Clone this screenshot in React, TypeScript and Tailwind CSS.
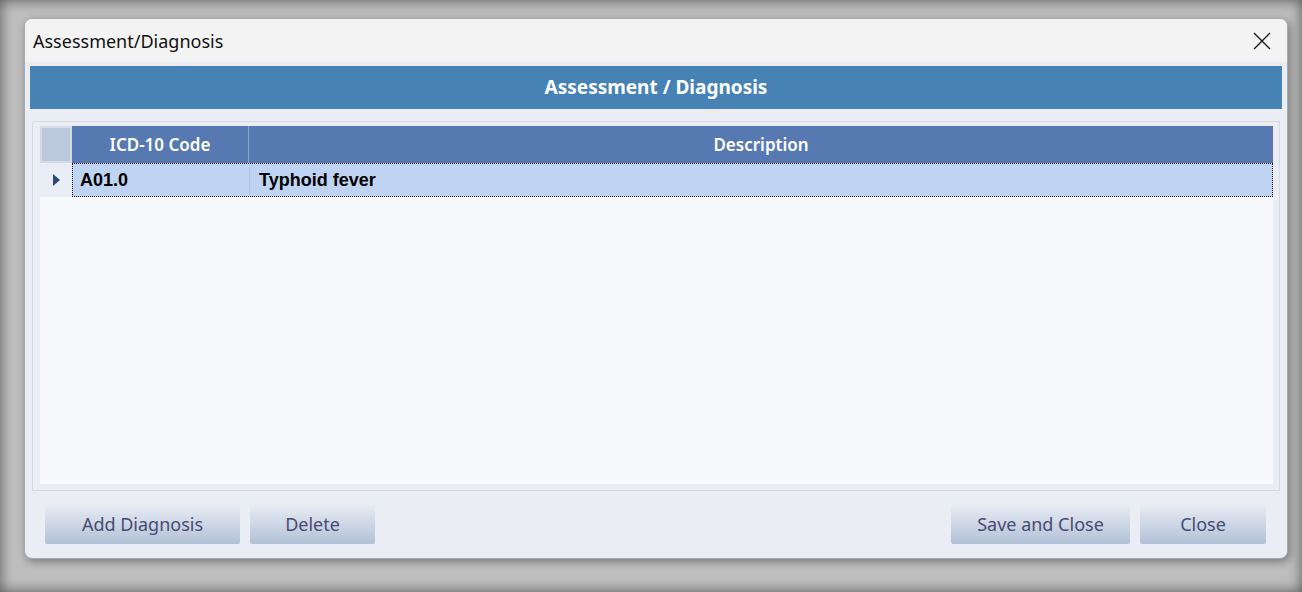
const font = { fontFamily: '"Noto Sans", "Open Sans", sans-serif' };

function DialogButton({ label, width }: { label: string; width: string }) {
  return (
    <button
      className={`${width} h-[40px] rounded-[2px] bg-gradient-to-b from-[#e9edf4] to-[#b2c1d7] text-[18px] text-[#4a4b72]`}
      type="button"
    >
      {label}
    </button>
  );
}

export default function App() {
  return (
    <div
      className="h-[592px] w-[1302px] bg-[#bebebe] pt-[18px] pl-[24px] shadow-[inset_0_0_14px_rgba(0,0,0,0.55)]"
      style={font}
    >
      <div className="flex h-[541px] w-[1264px] flex-col overflow-hidden rounded-[8px] border border-[#a9a9a9] bg-[#eaedf4] shadow-[2px_3px_8px_rgba(0,0,0,0.35)]">
        {/* title bar */}
        <div className="flex h-[43px] shrink-0 items-center justify-between bg-[#f3f3f3] pl-[8px] pr-[16px]">
          <span className="pt-[1px] text-[18px] text-[#111]">Assessment/Diagnosis</span>
          <svg width="18" height="18" viewBox="0 0 18 18">
            <path d="M1 1 L17 17 M17 1 L1 17" stroke="#1a1a1a" strokeWidth="1.4" />
          </svg>
        </div>

        <div className="flex flex-1 flex-col px-[5px] pt-[4px]">
          <div className="flex h-[43px] items-center justify-center bg-[#4682b4] text-[19px] font-bold text-white">
            Assessment / Diagnosis
          </div>

          {/* grid panel */}
          <div className="mt-[12px] ml-[2px] mr-[2px] flex h-[370px] flex-col rounded-tl-[3px] border border-[#d2d9e4] pt-[4px] pr-[6px] pb-[6px] pl-[7px]">
            <div className="flex flex-1 flex-col bg-[#f8f9fc]">
              <div className="flex h-[37px] bg-[#5679b1] text-[17px] font-semibold text-white">
                <div className="w-[32px] border-2 border-[#d3dae6] bg-[#bcc8dc]" />
                <div className="flex w-[177px] items-center justify-center border-r border-[#8aa3cc]">
                  ICD-10 Code
                </div>
                <div className="flex flex-1 items-center justify-center">Description</div>
              </div>
              <div
                className="flex h-[34px] text-[18px] font-bold text-black"
                style={{ fontFamily: '"Liberation Sans", Arial, sans-serif' }}
              >
                <div className="flex w-[32px] items-center justify-center bg-[#e9edf5]">
                  <svg width="7" height="12" viewBox="0 0 7 12">
                    <path d="M0 0 L7 6 L0 12 Z" fill="#2c4876" />
                  </svg>
                </div>
                <div className="flex flex-1 items-center border border-dotted border-black bg-[#bfd3f2]">
                  <div className="w-[177px] border-r border-[#adc2e3] pl-[7px]">A01.0</div>
                  <div className="pl-[9px]">Typhoid fever</div>
                </div>
              </div>
            </div>
          </div>

          {/* buttons */}
          <div className="flex items-center justify-between pt-[13px] pr-[16px] pl-[15px]">
            <div className="flex gap-[10px]">
              <DialogButton label="Add Diagnosis" width="w-[195px]" />
              <DialogButton label="Delete" width="w-[125px]" />
            </div>
            <div className="flex gap-[10px]">
              <DialogButton label="Save and Close" width="w-[179px]" />
              <DialogButton label="Close" width="w-[126px]" />
            </div>
          </div>
        </div>
      </div>
    </div>
  );
}
